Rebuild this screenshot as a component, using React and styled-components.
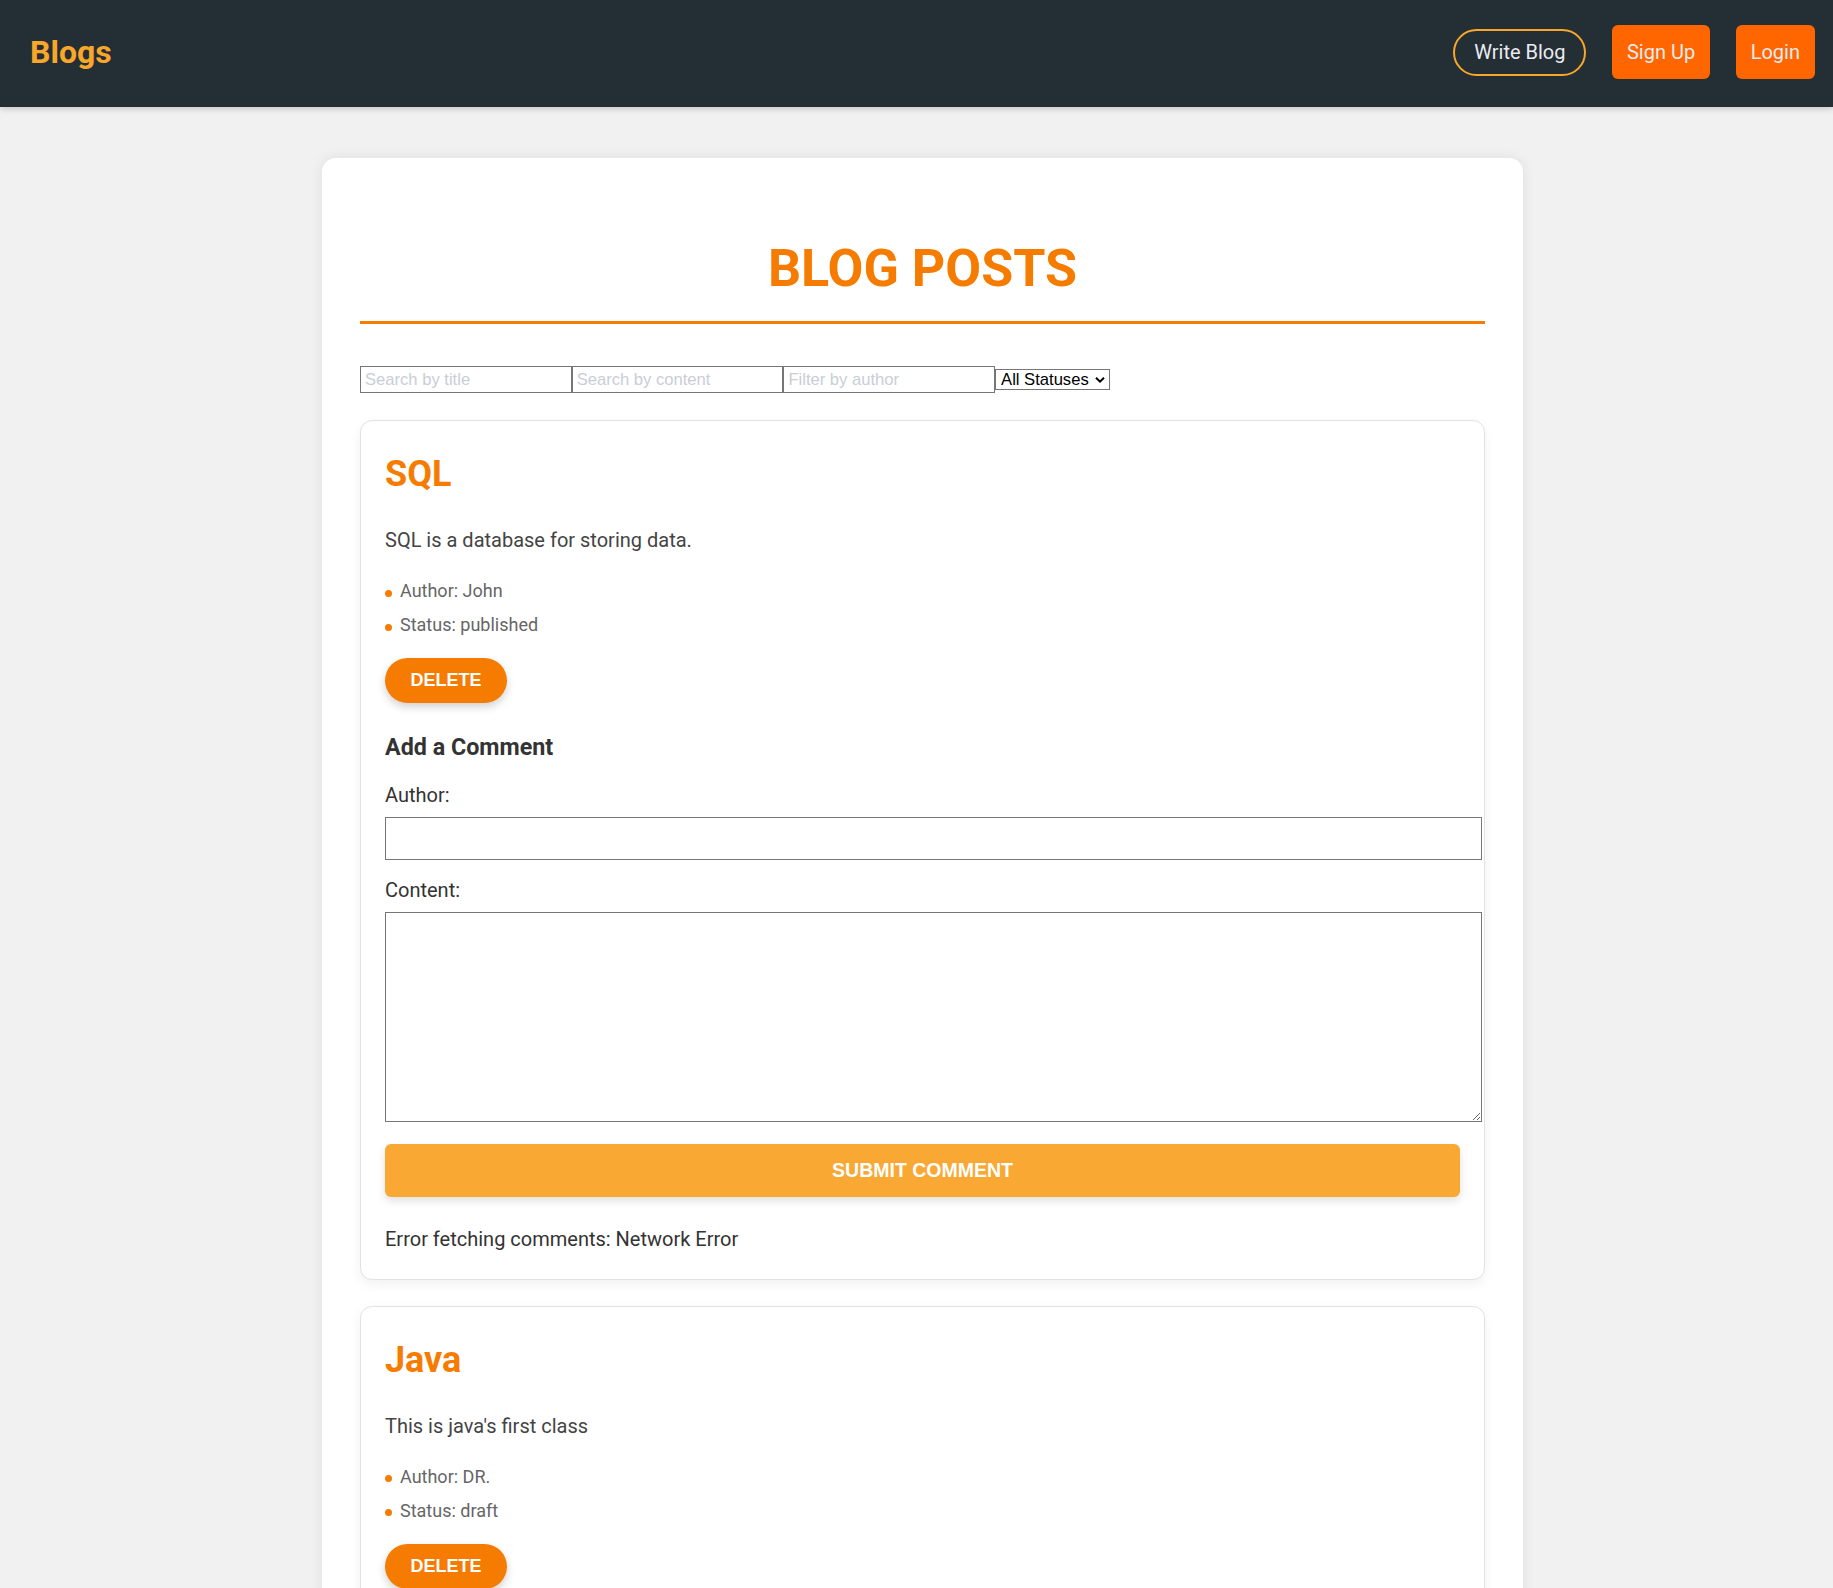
import React from "react";
import styled, { createGlobalStyle } from "styled-components";

const GlobalStyle = createGlobalStyle`
  * { box-sizing: border-box; }
  body {
    margin: 0;
    background: #f1f1f1;
    font-family: Roboto, "Liberation Sans", Arial, sans-serif;
    color: #333;
  }
`;

const Header = styled.header`
  height: 107px;
  padding: 0 18px 3px 30px;
  display: flex;
  align-items: center;
  justify-content: space-between;
  background: #242e35;
  box-shadow: 0 2px 6px rgba(0, 0, 0, 0.18);
  position: relative;
  z-index: 1;
`;

const Logo = styled.div`
  font-family: Roboto, sans-serif;
  font-weight: 700;
  font-size: 32px;
  color: #f9a72b;
`;

const Nav = styled.nav`
  display: flex;
  align-items: center;
  gap: 25.5px;
`;

const NavButton = styled.button`
  font-family: Roboto, sans-serif;
  font-size: 20px;
  line-height: 23px;
  color: #ebebf0;
  cursor: pointer;
  display: flex;
  align-items: center;
  ${({ $outline }) =>
    $outline
      ? `
    height: 47px;
    padding: 0 19px;
    background: transparent;
    border: 2px solid #f9a72b;
    border-radius: 24px;
  `
      : `
    height: 54px;
    padding: 0 15px;
    background: #ff6600;
    border: none;
    border-radius: 6px;
  `}
`;

const Main = styled.main`
  padding: 51px 0 40px 12px;
`;

const Container = styled.div`
  width: 1201px;
  margin: 0 auto;
  padding: 40px 38px 38px;
  background: #fff;
  border-radius: 14px;
  box-shadow: 0 0 14px rgba(0, 0, 0, 0.08);
`;

const Title = styled.h1`
  margin: 40px 0 42px;
  padding-bottom: 22px;
  border-bottom: 3px solid #f57c00;
  text-align: center;
  font-family: Roboto, sans-serif;
  font-weight: 700;
  font-size: 52px;
  line-height: 61px;
  color: #f57c00;
`;

const FilterBar = styled.div`
  display: flex;
  align-items: center;
  margin-bottom: 27px;
`;

const FilterInput = styled.input`
  width: 211.7px;
  height: 27px;
  padding: 1px 4px;
  border: 1px solid #767676;
  border-radius: 0;
  font-family: "Liberation Sans", Arial, sans-serif;
  font-size: 16.6px;
  color: #000;
  background: #fff;
  &::placeholder {
    color: #c9ced6;
  }
`;

const SelectWrap = styled.div`
  position: relative;
  display: flex;
`;

const Select = styled.select`
  appearance: none;
  -webkit-appearance: none;
  height: 21.5px;
  padding: 0 20px 0 5px;
  border: 1px solid #767676;
  border-radius: 0;
  background: #fff;
  font-family: "Liberation Sans", Arial, sans-serif;
  font-size: 16.6px;
  line-height: 19px;
  color: #000;
`;

const Chevron = styled.svg`
  position: absolute;
  right: 5px;
  top: 50%;
  transform: translateY(-50%);
  pointer-events: none;
`;

const PostCard = styled.article`
  border: 1px solid #e2e2e2;
  border-radius: 12px;
  padding: 24px 24px;
  margin-bottom: 26px;
  background: #fff;
  box-shadow: 0 4px 12px rgba(0, 0, 0, 0.06);
`;

const PostTitle = styled.h2`
  margin: 8px 0 0;
  font-family: Roboto, sans-serif;
  font-weight: 700;
  font-size: 36px;
  line-height: 42px;
  color: #f57c00;
`;

const PostBody = styled.p`
  margin: 33px 0 0;
  font-size: 20px;
  line-height: 24px;
  color: #444;
`;

const MetaList = styled.ul`
  list-style: none;
  margin: 28px 0 0;
  padding: 0;
`;

const MetaItem = styled.li`
  display: flex;
  align-items: center;
  font-size: 18px;
  line-height: 21px;
  color: #666;
  & + & {
    margin-top: 13px;
  }
  &::before {
    content: "";
    width: 7px;
    height: 7px;
    margin: 5px 8px 0 0;
    border-radius: 50%;
    background: #f57c00;
    flex: none;
  }
`;

const DeleteButton = styled.button`
  display: block;
  margin-top: 23px;
  height: 45px;
  padding: 0 25.5px;
  border: none;
  border-radius: 23px;
  background: #f57c00;
  color: #fff;
  font-family: "Liberation Sans", Arial, sans-serif;
  font-weight: 700;
  font-size: 18px;
  text-transform: uppercase;
  box-shadow: 0 4px 8px rgba(0, 0, 0, 0.18);
  cursor: pointer;
`;

const CommentHeading = styled.h3`
  margin: 31px 0 23px;
  font-family: Roboto, sans-serif;
  font-weight: 700;
  font-size: 23.3px;
  line-height: 26px;
  color: #333;
`;

const FormGroup = styled.div`
  margin-bottom: ${({ $last }) => ($last ? "22px" : "18px")};
`;

const FieldLabel = styled.label`
  display: block;
  margin-bottom: 10px;
  font-size: 20px;
  line-height: 24px;
  color: #333;
`;

const TextInput = styled.input`
  display: block;
  box-sizing: content-box;
  width: 100%;
  height: 21px;
  padding: 10px;
  border: 1px solid #767676;
  border-radius: 0;
  font-family: "Liberation Sans", Arial, sans-serif;
  font-size: 18px;
`;

const TextArea = styled.textarea`
  display: block;
  box-sizing: content-box;
  width: 100%;
  height: 188px;
  padding: 10px;
  margin: 0;
  border: 1px solid #767676;
  border-radius: 0;
  font-family: "Liberation Sans", Arial, sans-serif;
  font-size: 18px;
`;

const SubmitButton = styled.button`
  display: block;
  width: 100%;
  height: 52.5px;
  border: none;
  border-radius: 6px;
  background: #f9a833;
  color: #fff;
  font-family: "Liberation Sans", Arial, sans-serif;
  font-weight: 700;
  font-size: 19.5px;
  text-transform: uppercase;
  box-shadow: 0 4px 8px rgba(0, 0, 0, 0.12);
  cursor: pointer;
`;

const ErrorText = styled.p`
  margin: 30px 0 4px;
  font-size: 20px;
  line-height: 24px;
  color: #333;
`;

const posts = [
  {
    id: 1,
    title: "SQL",
    content: "SQL is a database for storing data.",
    author: "John",
    status: "published",
  },
  {
    id: 2,
    title: "Java",
    content: "This is java's first class",
    author: "DR.",
    status: "draft",
  },
];

function Post({ post }) {
  return (
    <PostCard>
      <PostTitle>{post.title}</PostTitle>
      <PostBody>{post.content}</PostBody>
      <MetaList>
        <MetaItem>Author: {post.author}</MetaItem>
        <MetaItem>Status: {post.status}</MetaItem>
      </MetaList>
      <DeleteButton>Delete</DeleteButton>
      <CommentHeading>Add a Comment</CommentHeading>
      <form onSubmit={(e) => e.preventDefault()}>
        <FormGroup>
          <FieldLabel htmlFor={`author-${post.id}`}>Author:</FieldLabel>
          <TextInput id={`author-${post.id}`} type="text" />
        </FormGroup>
        <FormGroup $last>
          <FieldLabel htmlFor={`content-${post.id}`}>Content:</FieldLabel>
          <TextArea id={`content-${post.id}`} />
        </FormGroup>
        <SubmitButton type="submit">Submit Comment</SubmitButton>
      </form>
      <ErrorText>Error fetching comments: Network Error</ErrorText>
    </PostCard>
  );
}

export default function App() {
  return (
    <>
      <GlobalStyle />
      <Header>
        <Logo>Blogs</Logo>
        <Nav>
          <NavButton $outline>Write Blog</NavButton>
          <NavButton>Sign Up</NavButton>
          <NavButton>Login</NavButton>
        </Nav>
      </Header>
      <Main>
        <Container>
          <Title>BLOG POSTS</Title>
          <FilterBar>
            <FilterInput placeholder="Search by title" />
            <FilterInput placeholder="Search by content" />
            <FilterInput placeholder="Filter by author" />
            <SelectWrap>
              <Select defaultValue="">
                <option value="">All Statuses</option>
                <option value="published">Published</option>
                <option value="draft">Draft</option>
              </Select>
              <Chevron width="10" height="7" viewBox="0 0 10 7">
                <polyline
                  points="1,1.2 5,5.2 9,1.2"
                  fill="none"
                  stroke="#000"
                  strokeWidth="2"
                />
              </Chevron>
            </SelectWrap>
          </FilterBar>
          {posts.map((p) => (
            <Post key={p.id} post={p} />
          ))}
        </Container>
      </Main>
    </>
  );
}
